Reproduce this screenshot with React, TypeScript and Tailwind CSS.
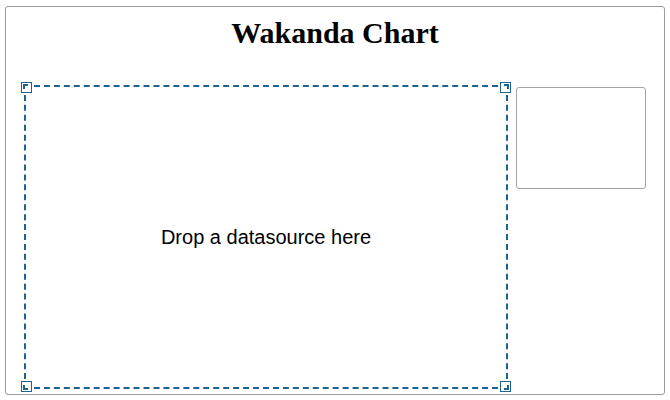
import React from "react";

function Handle({ pos }: { pos: "tl" | "tr" | "bl" | "br" }) {
  const place =
    pos === "tl"
      ? "-left-[5px] -top-[5px]"
      : pos === "tr"
      ? "-right-[5px] -top-[5px]"
      : pos === "bl"
      ? "-left-[5px] -bottom-[5px]"
      : "-right-[5px] -bottom-[5px]";
  const mark =
    pos === "tl"
      ? "left-[1px] top-[1px] border-l-2 border-t-2"
      : pos === "tr"
      ? "right-[1px] top-[1px] border-r-2 border-t-2"
      : pos === "bl"
      ? "left-[1px] bottom-[1px] border-l-2 border-b-2"
      : "right-[1px] bottom-[1px] border-r-2 border-b-2";
  return (
    <div className={`absolute ${place} w-[11px] h-[11px] border border-[#1c6392] bg-white`}>
      <div className={`absolute ${mark} w-[5px] h-[5px] border-[#1c6392]`} />
    </div>
  );
}

export default function App() {
  return (
    <div className="w-[670px] h-[400px] bg-white pl-[5px] pt-[6px]">
      <div className="w-[660px] h-[389px] border border-[#9b9b9b] rounded-[3px] flex flex-col">
        <h1
          className="mt-[8px] h-[36px] leading-[36px] text-center text-[30px] font-bold text-black"
          style={{ fontFamily: '"Liberation Serif", "Times New Roman", serif' }}
        >
          Wakanda Chart
        </h1>
        <div className="mt-[34px] pl-[18px] flex items-start gap-[8px]">
          <div className="relative w-[484px] h-[304px] border-2 border-dashed border-[#1c6392] flex items-center justify-center">
            <span
              className="text-[20px] text-black leading-none"
              style={{ fontFamily: '"Liberation Sans", Arial, sans-serif' }}
            >
              Drop a datasource here
            </span>
            <Handle pos="tl" />
            <Handle pos="tr" />
            <Handle pos="bl" />
            <Handle pos="br" />
          </div>
          <div className="mt-[2px] w-[130px] h-[102px] border border-[#a3a3a3] rounded-[3px]" />
        </div>
      </div>
    </div>
  );
}
